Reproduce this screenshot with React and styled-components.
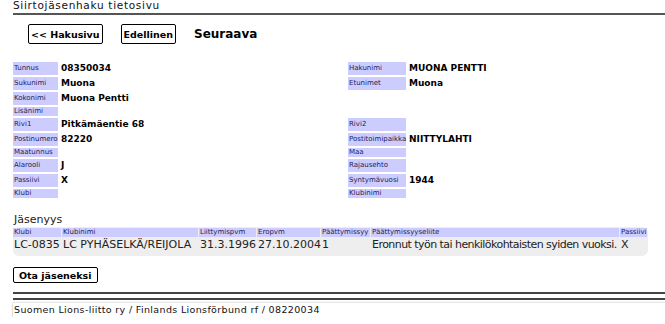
import React from 'react'
import styled, {createGlobalStyle} from 'styled-components'

const GlobalStyle = createGlobalStyle`
  body {
    margin: 0;
    background: #ffffff;
    font-family: "DejaVu Sans", Verdana, sans-serif;
    color: #000;
  }
`

const Page = styled.div`
  padding-left: 13px;
  overflow: hidden;
`

const Title = styled.div`
  font-size: 10.5px;
  letter-spacing: 0.7px;
  line-height: 11px;
  padding-bottom: 2px;
  border-bottom: 2px solid #555;
  color: #111;
`

const Nav = styled.div`
  display: flex;
  align-items: center;
  gap: 18px;
  margin: 9px 0 0 15px;
`

const NavButton = styled.button`
  font-family: "DejaVu Sans", Verdana, sans-serif;
  font-size: 9.5px;
  font-weight: bold;
  height: 20px;
  padding: 0 2px;
  background: #fff;
  border: 1px solid #000;
  border-radius: 2px;
  color: #000;
`

const NavText = styled.span`
  font-size: 12px;
  font-weight: bold;
`

const Fields = styled.div`
  display: grid;
  grid-template-columns: 45px 286px 58px 1fr;
  column-gap: 2px;
  row-gap: 2px;
  margin-top: 18px;
  margin-right: 13px;
`

const Label = styled.div`
  background: ${p => (p.empty ? 'transparent' : '#ccccff')};
  font-size: 7px;
  line-height: 9px;
  color: #222255;
  padding: 0 1px;
  white-space: nowrap;
  display: flex;
  align-items: center;
`

const Value = styled.div`
  font-size: 9px;
  font-weight: bold;
  line-height: 13px;
  padding-left: 1px;
`

const Section = styled.div`
  font-size: 11px;
  color: #222;
  margin-top: 15px;
  line-height: 13px;
  padding-left: 1px;
`

const Members = styled.div`
  display: grid;
  grid-template-columns: 48px 136px 57px 63px 49px 248px 27px;
  column-gap: 1px;
  width: 635px;
  background: #eeeeee;
  border-radius: 6px;
  margin-top: 1px;
  padding: 1px 0 3px 0;
`

const HeadCell = styled.div`
  background: #ccccff;
  font-size: 7px;
  line-height: 9px;
  color: #222255;
  padding-left: 1px;
  white-space: nowrap;
  overflow: hidden;
`

const Cell = styled.div`
  font-size: 11px;
  letter-spacing: ${p => (p.tight ? '-0.55px' : '0')};
  line-height: 16px;
  color: #222;
  padding-left: 1px;
  white-space: nowrap;
`

const ActionButton = styled(NavButton)`
  height: 16px;
  padding: 0 5px;
  margin-top: 11px;
  display: block;
`

const Rule = styled.div`
  border-top: 2px solid #444;
  margin-top: ${p => p.top}px;
`

const Footer = styled.div`
  margin-top: 2px;
  border-top: 1px solid #e6e6e6;
  box-shadow: 0 1px 2px #999;
  font-size: 9.5px;
  letter-spacing: 0.35px;
  line-height: 14px;
  padding-left: 1px;
  color: #111;
`

const rows = [
  ['Tunnus', '08350034', 'Hakunimi', 'MUONA PENTTI'],
  ['Sukunimi', 'Muona', 'Etunimet', 'Muona'],
  ['Kokonimi', 'Muona Pentti', null, ''],
  ['Lisänimi', '', null, ''],
  ['Rivi1', 'Pitkämäentie 68', 'Rivi2', ''],
  ['Postinumero', '82220', 'Postitoimipaikka', 'NIITTYLAHTI'],
  ['Maatunnus', '', 'Maa', ''],
  ['Alarooli', 'J', 'Rajausehto', ''],
  ['Passiivi', 'X', 'Syntymävuosi', '1944'],
  ['Klubi', '', 'Klubinimi', ''],
]

const heads = ['Klubi', 'Klubinimi', 'Liittymispvm', 'Eropvm', 'Päättymissyy', 'Päättymissyyseliite', 'Passiivi']
const data = ['LC-0835', 'LC PYHÄSELKÄ/REIJOLA', '31.3.1996', '27.10.2004', '1', 'Eronnut työn tai henkilökohtaisten syiden vuoksi.', 'X']

const App = () => (
  <Page>
    <GlobalStyle />
    <Title>Siirtojäsenhaku tietosivu</Title>
    <Nav>
      <NavButton>&lt;&lt; Hakusivu</NavButton>
      <NavButton>Edellinen</NavButton>
      <NavText>Seuraava</NavText>
    </Nav>
    <Fields>
      {rows.map(([l1, v1, l2, v2]) => (
        <React.Fragment key={l1}>
          <Label>{l1}</Label>
          <Value>{v1}</Value>
          <Label empty={l2 === null}>{l2}</Label>
          <Value>{v2}</Value>
        </React.Fragment>
      ))}
    </Fields>
    <Section>Jäsenyys</Section>
    <Members>
      {heads.map(h => <HeadCell key={h}>{h}</HeadCell>)}
      {data.map((d, i) => <Cell key={i} tight={i === 5}>{d}</Cell>)}
    </Members>
    <ActionButton>Ota jäseneksi</ActionButton>
    <Rule top={9} />
    <Rule top={4} />
    <Footer>Suomen Lions-liitto ry / Finlands Lionsförbund rf / 08220034</Footer>
  </Page>
)

export default App
